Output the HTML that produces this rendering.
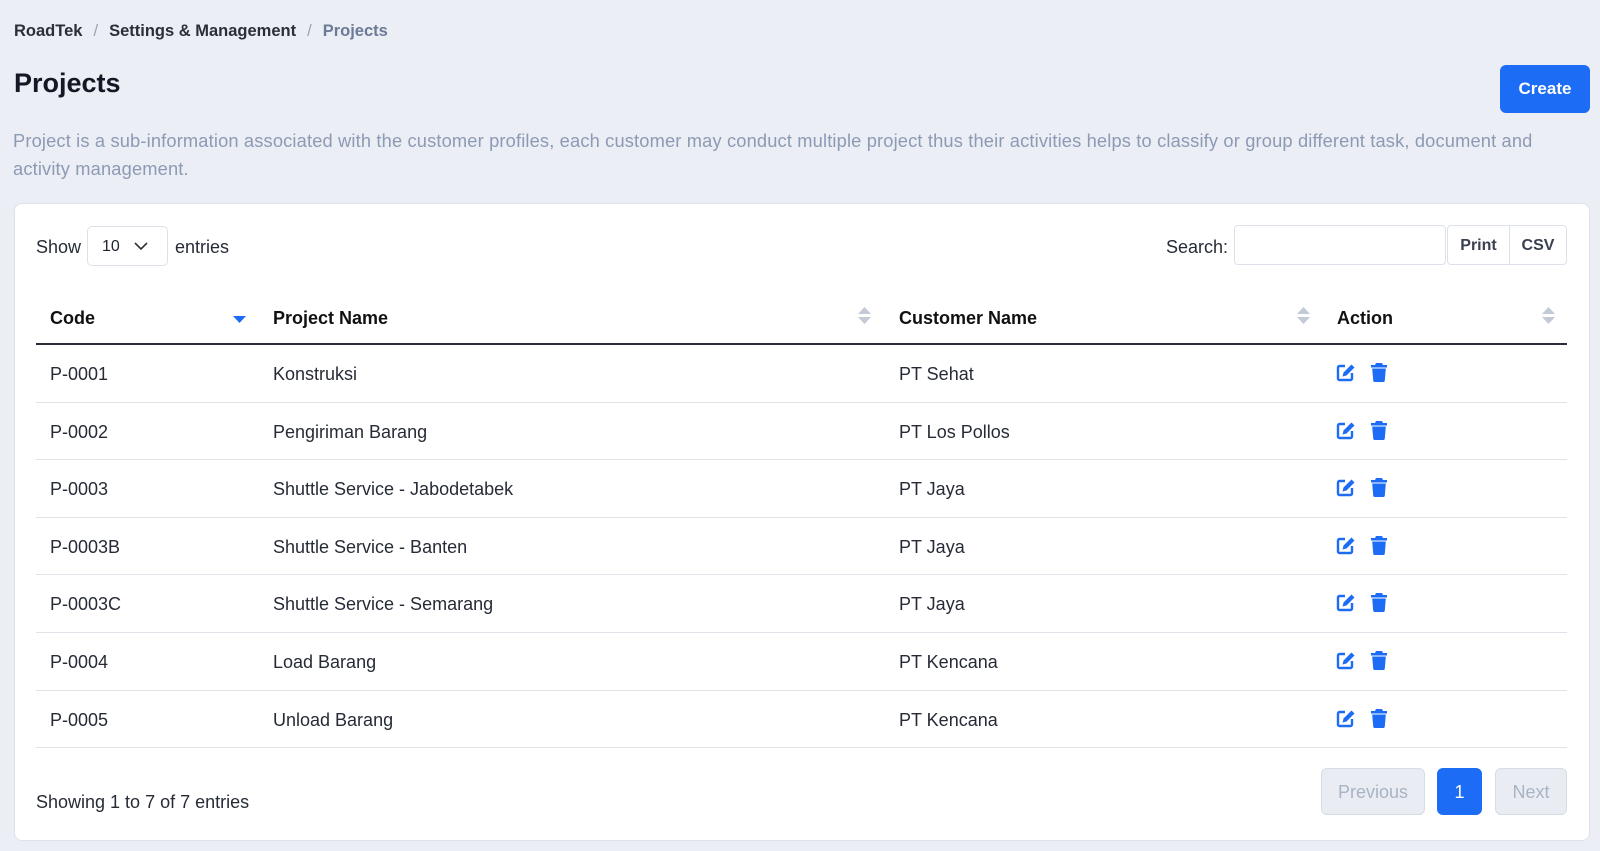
<!DOCTYPE html>
<html><head><meta charset="utf-8"><style>
*{box-sizing:border-box;margin:0;padding:0}
body{width:1600px;height:851px;background:#ebeef4;font-family:"Liberation Sans",sans-serif;color:#1f2430;position:relative;overflow:hidden}
.a{position:absolute;white-space:nowrap}
.bc{top:22px;left:14px;font-size:16.5px;font-weight:bold;color:#2a2f3a}
.bc .s{color:#9aa3b4;font-weight:normal;margin:0 11px}
.bc .c{color:#6b7a96}
h1{position:absolute;left:14px;top:68px;font-size:27px;font-weight:bold;color:#141824}
.create{left:1500px;top:65px;width:90px;height:48px;background:#1d6cf5;color:#fff;border-radius:6px;font-size:17px;font-weight:bold;text-align:center;line-height:48px}
.desc{left:13px;top:127px;font-size:18.3px;line-height:28px;color:#8d9ab5;letter-spacing:0.15px}
.card{left:14px;top:203px;width:1576px;height:638px;background:#fff;border:1px solid #dde2ea;border-radius:8px}
.t{font-size:18px;color:#262b36}
.sel{left:87px;top:226px;width:81px;height:40px;border:1px solid #dde2ea;border-radius:5px;font-size:16px;padding:11px 0 0 14px}
.inp{left:1234px;top:225px;width:212px;height:40px;border:1px solid #dde2ea;border-radius:4px}
.btn{top:225px;height:40px;border:1px solid #dde2ea;font-size:16px;font-weight:bold;color:#3a4050;text-align:center;line-height:40px;background:#fff}
.th{top:308px;font-size:18px;font-weight:bold;color:#111}
.line{left:36px;width:1531px;height:1px;background:#e0e4ea}
.td{font-size:18px;color:#262b36}
.pg{top:768px;height:47px;border:1px solid #d6dbe4;border-radius:6px;background:#e9edf3;color:#a9b3c4;font-size:18px;text-align:center;line-height:47px}
</style></head><body>
<div class="a bc">RoadTek<span class="s">/</span>Settings &amp; Management<span class="s">/</span><span class="c">Projects</span></div>
<h1>Projects</h1>
<div class="a create">Create</div>
<div class="a desc">Project is a sub-information associated with the customer profiles, each customer may conduct multiple project thus their activities helps to classify or group different task, document and<br>activity management.</div>
<div class="a card"></div>
<div class="a t" style="left:36px;top:237px">Show</div>
<div class="a sel">10 <svg style="position:absolute;left:46px;top:15px" width="14" height="9" viewBox="0 0 14 9"><path d="M1 1l6 6 6-6" fill="none" stroke="#333" stroke-width="1.6"/></svg></div>
<div class="a t" style="left:175px;top:237px">entries</div>
<div class="a t" style="left:1166px;top:237px">Search:</div>
<div class="a inp"></div>
<div class="a btn" style="left:1447px;width:63px;border-radius:4px 0 0 4px">Print</div>
<div class="a btn" style="left:1509px;width:58px;border-radius:0 4px 4px 0">CSV</div>
<div class="a th" style="left:50px">Code</div>
<div class="a th" style="left:273px">Project Name</div>
<div class="a th" style="left:899px">Customer Name</div>
<div class="a th" style="left:1337px">Action</div>
<svg class="a" style="left:233px;top:316px" width="13" height="8"><path d="M0 0h13L6.5 7z" fill="#1d6cf5"/></svg>
<svg class="a" style="left:858px;top:307px" width="13" height="18"><path d="M0 7h13L6.5 0zM0 10h13L6.5 17z" fill="#c3cad6"/></svg>
<svg class="a" style="left:1297px;top:307px" width="13" height="18"><path d="M0 7h13L6.5 0zM0 10h13L6.5 17z" fill="#c3cad6"/></svg>
<svg class="a" style="left:1542px;top:307px" width="13" height="18"><path d="M0 7h13L6.5 0zM0 10h13L6.5 17z" fill="#c3cad6"/></svg>
<div class="a" style="left:36px;top:343px;width:1531px;height:2px;background:#2a2e36"></div>
<div id="rows"></div>
<div class="a line" style="top:747px"></div>
<div class="a t" style="left:36px;top:792px">Showing 1 to 7 of 7 entries</div>
<div class="a pg" style="left:1321px;width:104px">Previous</div>
<div class="a pg" style="left:1437px;width:45px;background:#1d6cf5;border-color:#1d6cf5;color:#fff">1</div>
<div class="a pg" style="left:1495px;width:72px">Next</div>
<script>
var d=[["P-0001","Konstruksi","PT Sehat"],["P-0002","Pengiriman Barang","PT Los Pollos"],["P-0003","Shuttle Service - Jabodetabek","PT Jaya"],["P-0003B","Shuttle Service - Banten","PT Jaya"],["P-0003C","Shuttle Service - Semarang","PT Jaya"],["P-0004","Load Barang","PT Kencana"],["P-0005","Unload Barang","PT Kencana"]];
var h="";
d.forEach(function(r,i){var c=373+i*57.6;var t=c-9;
h+='<div class="a td" style="left:50px;top:'+t+'px">'+r[0]+'</div><div class="a td" style="left:273px;top:'+t+'px">'+r[1]+'</div><div class="a td" style="left:899px;top:'+t+'px">'+r[2]+'</div>';
h+='<svg class="a" style="left:1336px;top:'+(c-10)+'px" width="20" height="19" viewBox="0 0 20 19"><path d="M9 3H3.5a1.5 1.5 0 0 0-1.5 1.5v11A1.5 1.5 0 0 0 3.5 17h11a1.5 1.5 0 0 0 1.5-1.5V10" fill="none" stroke="#1d6cf5" stroke-width="2.4"/><path d="M15.5 1.5l3 3-8 8-4 1 1-4z" fill="#1d6cf5"/></svg>';
h+='<svg class="a" style="left:1371px;top:'+(c-10)+'px" width="16" height="19" viewBox="0 0 16 19"><path d="M5 0h6l1 2h4v2.5H0V2h4zM1.2 5.5h13.6l-1 12A1.6 1.6 0 0 1 12.2 19H3.8a1.6 1.6 0 0 1-1.6-1.5z" fill="#1d6cf5"/></svg>';
if(i<6)h+='<div class="a line" style="top:'+(c+28.5)+'px"></div>';});
document.getElementById("rows").innerHTML=h;
</script>
</body></html>
